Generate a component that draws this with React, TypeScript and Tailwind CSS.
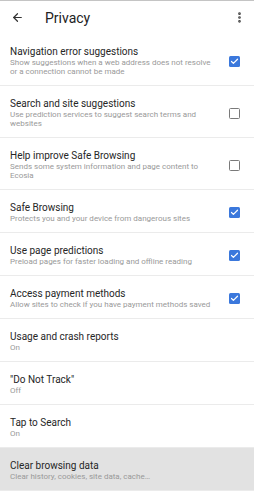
import { ArrowLeft, MoreVertical, Check } from "lucide-react";

type Item = {
  title: string;
  sub: string;
  check?: boolean;
  pressed?: boolean;
};

const items: Item[] = [
  { title: "Navigation error suggestions", sub: "Show suggestions when a web address does not resolve or a connection cannot be made", check: true },
  { title: "Search and site suggestions", sub: "Use prediction services to suggest search terms and websites", check: false },
  { title: "Help improve Safe Browsing", sub: "Sends some system information and page content to Ecosia", check: false },
  { title: "Safe Browsing", sub: "Protects you and your device from dangerous sites", check: true },
  { title: "Use page predictions", sub: "Preload pages for faster loading and offline reading", check: true },
  { title: "Access payment methods", sub: "Allow sites to check if you have payment methods saved", check: true },
  { title: "Usage and crash reports", sub: "On" },
  { title: '"Do Not Track"', sub: "Off" },
  { title: "Tap to Search", sub: "On" },
  { title: "Clear browsing data", sub: "Clear history, cookies, site data, cache\u2026", pressed: true },
];

const Box = ({ on }: { on: boolean }) =>
  on ? (
    <div className="w-[11px] h-[11px] rounded-[1.5px] bg-[#3b78dc] flex items-center justify-center">
      <Check size={9} strokeWidth={3.2} className="text-white" />
    </div>
  ) : (
    <div className="w-[11px] h-[11px] rounded-[1.5px] border-[1.5px] border-[#7a7a7a]" />
  );

export default function App() {
  return (
    <div className="w-[254px] h-[500px] bg-white overflow-hidden border-t border-[#c4c4c4]" style={{ fontFamily: "Roboto, 'Noto Sans', sans-serif" }}>
      {/* header */}
      <div className="h-[33px] flex items-center">
        <ArrowLeft size={13} strokeWidth={2.2} className="ml-[11px] text-[#333]" />
        <span className="ml-[21px] text-[14px] text-[#222] leading-none">Privacy</span>
        <MoreVertical size={13} strokeWidth={3} className="ml-auto mr-[8px] text-[#444]" />
      </div>

      {items.map((it) => (
        <div
          key={it.title}
          className={`flex items-center pl-[10px] pt-[12px] pb-[9px] border-b border-[#ebebeb] ${it.pressed ? "bg-[#e2e2e2]" : ""}`}
        >
          <div className="w-[204px]">
            <div className="text-[10px] leading-[12px] text-[#262626]">{it.title}</div>
            <div className="text-[8px] leading-[9px] text-[#999]">{it.sub}</div>
          </div>
          {it.check !== undefined && (
            <div className="ml-auto mr-[14px]">
              <Box on={it.check} />
            </div>
          )}
        </div>
      ))}
    </div>
  );
}
